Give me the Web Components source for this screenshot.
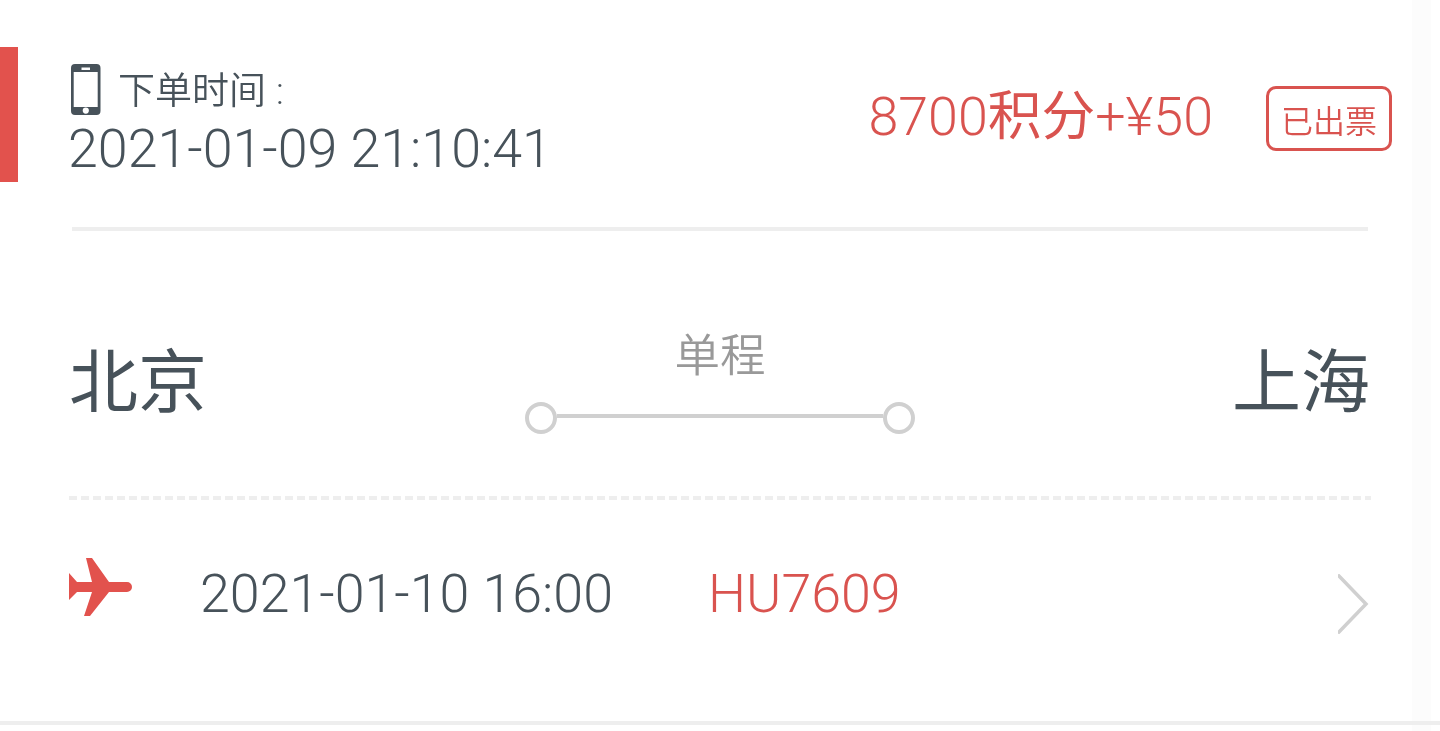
<!DOCTYPE html>
<html lang="zh">
<head>
<meta charset="utf-8">
<title>订单</title>
<style>
  html, body { margin: 0; padding: 0; height: 100%; overflow: hidden; }
  body {
    background: linear-gradient(to right, #fff 1412px, #fcfcfc 1412px, #fcfcfc 1431px, #fff 1431px);
    font-family: Roboto, "Noto Sans CJK SC", sans-serif;
    color: #47525a;
  }
</style>
</head>
<body>
<order-card>
  <order-header slot="header" placed="2021-01-09 21:10:41" price="8700" cash="+¥50" status="已出票"></order-header>
  <order-route slot="route" from="北京" to="上海" kind="单程"></order-route>
  <order-flight slot="flight" date="2021-01-10 16:00" code="HU7609"></order-flight>
</order-card>

<script>
const FONT = 'Roboto, "Noto Sans CJK SC", sans-serif';

class OrderCard extends HTMLElement {
  constructor() {
    super();
    this.attachShadow({ mode: "open" }).innerHTML = `
      <style>
        :host { display: block; width: 1440px; height: 725px; box-sizing: border-box; border-bottom: 4px solid #eeeeee; font-family: ${FONT}; will-change: transform; }
        .top { height: 231px; box-sizing: border-box; padding-top: 47px; }
        .mid { height: 269px; }
      </style>
      <div class="top"><slot name="header"></slot></div>
      <div class="mid"><slot name="route"></slot></div>
      <div><slot name="flight"></slot></div>`;
  }
}

class OrderHeader extends HTMLElement {
  constructor() {
    super();
    const a = (n) => this.getAttribute(n);
    this.attachShadow({ mode: "open" }).innerHTML = `
      <style>
        :host { display: block; height: 184px; box-sizing: border-box; border-bottom: 4px solid #eeeeee; margin-left: 72px; width: 1296px; }
        .row { display: flex; align-items: flex-start; height: 135px; margin-left: -72px; width: 1392px; border-left: 18px solid #e2524d; box-sizing: border-box; padding-left: 50px; }
        .when { flex: 1; padding-top: 18px; }
        .label { display: flex; align-items: center; gap: 17px; height: 54px; margin-left: 3px; font-size: 37px; font-weight: 350; line-height: 54px; color: #47525a; }
        .label svg { display: block; flex: none; margin-top: -5px; }
        .label i { font-style: normal; font-weight: 300; margin-left: 10px; }
        .time { font-size: 53.75px; font-weight: 300; line-height: 58px; color: #47525a; margin-top: 1px; white-space: nowrap; }
        .price { font-size: 53.75px; font-weight: 300; line-height: 60px; color: #d9534f; margin-top: 40px; margin-right: 53px; white-space: nowrap; }
        .price b { font-weight: 400; }
        .tag { width: 126px; height: 65px; box-sizing: border-box; border: 3px solid #d9534f; border-radius: 10px; margin-top: 39px; display: flex; align-items: center; justify-content: center; color: #d9534f; font-size: 32px; font-weight: 350; }
      </style>
      <div class="row">
        <div class="when">
          <div class="label">
            <svg width="30" height="51" viewBox="0 0 30 51"><path fill="#47525a" fill-rule="evenodd" d="M4 0h21.500a4 4 0 0 1 4 4v43a4 4 0 0 1-4 4H4a4 4 0 0 1-4-4V4a4 4 0 0 1 4-4zM2.700 8v35h24V8zM10.500 3.500v2.500h8.500V3.500zM14.800 43.500a3.100 3.100 0 1 0 0 6.200 3.100 3.100 0 0 0 0-6.200z"/></svg>
            <span>下单时间<i>:</i></span>
          </div>
          <div class="time">${a("placed")}</div>
        </div>
        <div class="price">${a("price")}<b>积分</b>${a("cash")}</div>
        <div class="tag">${a("status")}</div>
      </div>`;
  }
}

class OrderRoute extends HTMLElement {
  constructor() {
    super();
    const a = (n) => this.getAttribute(n);
    this.attachShadow({ mode: "open" }).innerHTML = `
      <style>
        :host { display: block; height: 269px; box-sizing: border-box; margin-left: 69px; width: 1302px; }
        .row { display: grid; grid-template-columns: 1fr auto 1fr; height: 265px; padding: 0 2px; }
        .rule { height: 4px; background: repeating-linear-gradient(to right, #eeeeee 0 8px, transparent 8px 12px); }
        .city { font-size: 69px; font-weight: 400; line-height: 80px; margin: 113px 0 0 -2px; color: #47525a; }
        .city.to { text-align: right; margin: 113px -1px 0 0; }
        .mid { display: flex; flex-direction: column; align-items: center; padding-top: 98px; width: 390px; }
        .kind { font-size: 45.5px; font-weight: 350; line-height: 56px; color: #999999; }
        .track { display: flex; align-items: flex-start; width: 100%; margin-top: 17px; }
        .dot { width: 32px; height: 32px; box-sizing: border-box; border: 4px solid #d0d0d0; border-radius: 50%; flex: none; }
        .line { flex: 1; height: 4px; margin-top: 12px; background: #d0d0d0; }
      </style>
      <div class="row">
        <div class="city">${a("from")}</div>
        <div class="mid">
          <div class="kind">${a("kind")}</div>
          <div class="track"><span class="dot"></span><span class="line"></span><span class="dot"></span></div>
        </div>
        <div class="city to">${a("to")}</div>
      </div>
      <div class="rule"></div>`;
  }
}

class OrderFlight extends HTMLElement {
  constructor() {
    super();
    const a = (n) => this.getAttribute(n);
    this.attachShadow({ mode: "open" }).innerHTML = `
      <style>
        :host { display: block; margin-left: 69px; width: 1302px; }
        .row { display: flex; align-items: flex-start; }
        svg.plane { margin-top: 57px; flex: none; display: block; }
        .date { font-size: 53.75px; font-weight: 300; line-height: 60px; margin: 64px 0 0 67px; width: 508px; white-space: nowrap; color: #47525a; }
        .code { font-size: 53.75px; font-weight: 300; line-height: 60px; margin-top: 64px; color: #d9534f; flex: 1; }
        svg.arrow { margin-top: 74px; flex: none; display: block; }
      </style>
      <div class="row">
        <svg class="plane" width="64" height="60" viewBox="0 0 64 60"><path fill="#e2524d" d="M17 1h6l17 24h18a5 5 0 0 1 0 10H40L21 59h-6l8-24H8L0 43V16l8 9h15z"/></svg>
        <div class="date">${a("date")}</div>
        <div class="code">${a("code")}</div>
        <svg class="arrow" width="33" height="60" viewBox="0 0 33 60"><path fill="none" stroke="#d0d0d0" stroke-width="3.500" stroke-linecap="square" d="M1 2l27 28L1 58"/></svg>
      </div>`;
  }
}

customElements.define("order-card", OrderCard);
customElements.define("order-header", OrderHeader);
customElements.define("order-route", OrderRoute);
customElements.define("order-flight", OrderFlight);
</script>
</body>
</html>
